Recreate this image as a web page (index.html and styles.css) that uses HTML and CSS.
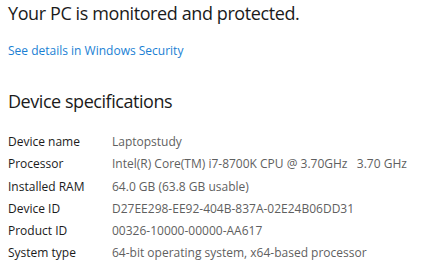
FILE: index.html
```html
<!DOCTYPE html>
<html lang="en">
<head>
    <meta charset="UTF-8">
    <title>About</title>
    <link rel="stylesheet" href="styles.css">
</head>
<body>
    <div class="page">
        <h2 class="status">Your PC is monitored and protected.</h2>
        <a class="link" href="#">See details in Windows Security</a>

        <h2 class="section-title">Device specifications</h2>

        <div class="specs">
            <div class="spec-row">
                <span class="label">Device name</span>
                <span class="value">Laptopstudy</span>
            </div>
            <div class="spec-row">
                <span class="label">Processor</span>
                <span class="value">Intel(R) Core(TM) i7-8700K CPU @ 3.70GHz&nbsp;&nbsp;&nbsp;3.70 GHz</span>
            </div>
            <div class="spec-row">
                <span class="label">Installed RAM</span>
                <span class="value">64.0 GB (63.8 GB usable)</span>
            </div>
            <div class="spec-row">
                <span class="label">Device ID</span>
                <span class="value">D27EE298-EE92-404B-837A-02E24B06DD31</span>
            </div>
            <div class="spec-row">
                <span class="label">Product ID</span>
                <span class="value">00326-10000-00000-AA617</span>
            </div>
            <div class="spec-row">
                <span class="label">System type</span>
                <span class="value">64-bit operating system, x64-based processor</span>
            </div>
        </div>
    </div>
</body>
</html>
```

FILE: styles.css
```css
* {
    margin: 0;
    padding: 0;
    box-sizing: border-box;
}

body {
    font-family: 'Open Sans', 'Noto Sans', sans-serif;
    background: #ffffff;
    color: #1b1b1b;
}

.page {
    padding: 0 8px;
}

.status {
    font-weight: 400;
    font-size: 18px;
    line-height: 26px;
    letter-spacing: -0.4px;
}

.link {
    display: inline-block;
    margin-top: 16px;
    font-size: 12px;
    line-height: 18px;
    color: #1a7fd4;
    text-decoration: none;
}

.section-title {
    font-weight: 400;
    font-size: 18px;
    line-height: 26px;
    letter-spacing: -0.45px;
    margin-top: 28px;
}

.specs {
    margin-top: 17px;
}

.spec-row {
    display: flex;
    font-size: 12px;
    line-height: 22.3px;
}

.label {
    width: 104px;
    flex-shrink: 0;
    color: #1b1b1b;
}

.value {
    color: #5f5f5f;
    white-space: nowrap;
}
```
